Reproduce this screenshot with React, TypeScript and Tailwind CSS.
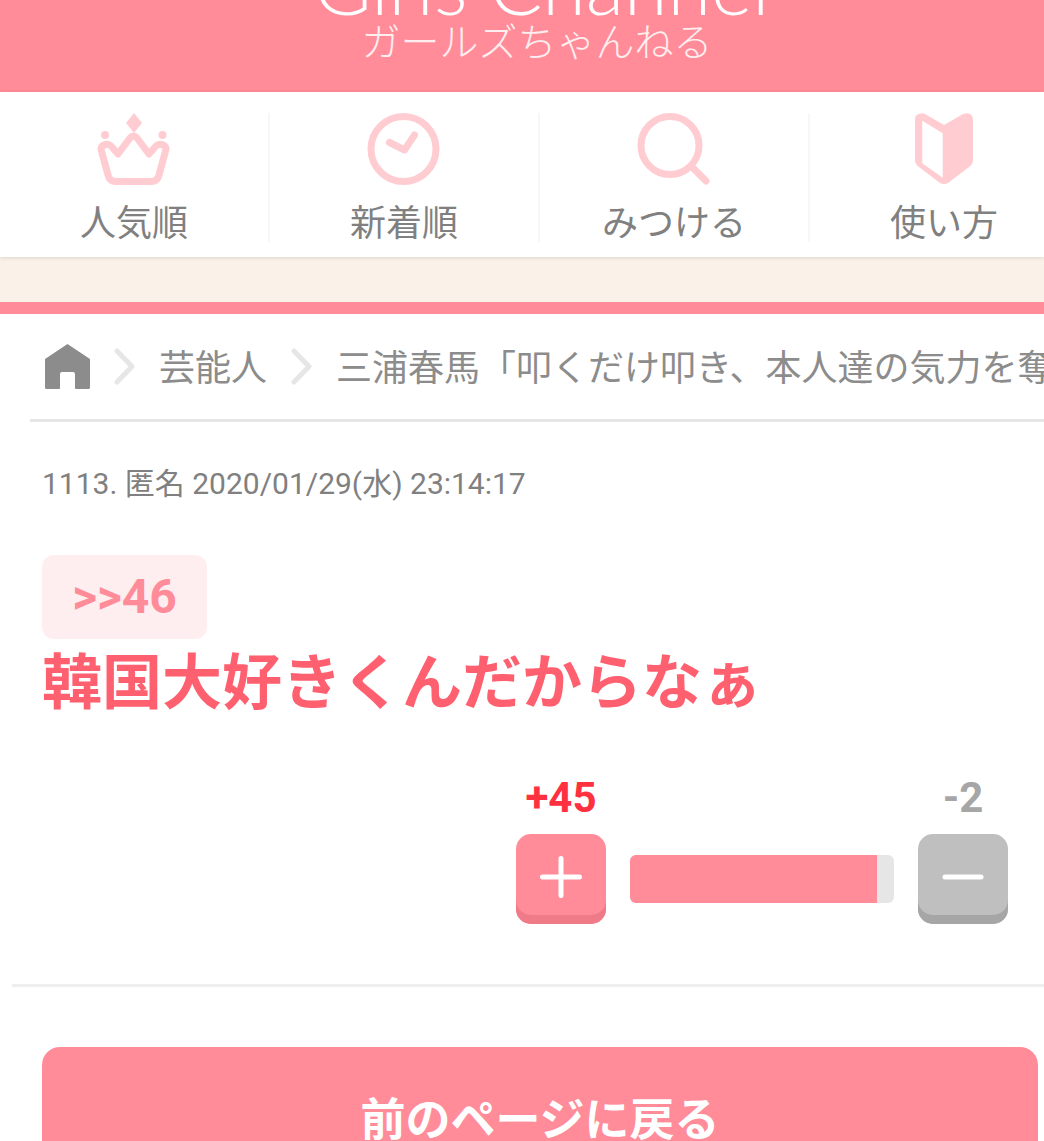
const jp = "font-['Roboto','Noto_Sans_CJK_JP',sans-serif]";

const CrownIcon = () => (
  <svg width="73" height="72" viewBox="0 0 73 72" fill="none">
    <path d="M37 0L45 10L37 20L29 10Z" fill="#ffccd2" />
    <circle cx="8" cy="22" r="4" fill="#ffccd2" />
    <circle cx="65.500" cy="22" r="4" fill="#ffccd2" />
    <path
      d="M4.500 38Q3 34 7 32Q11 30 14 33L21 41L33 25Q36.500 21 40 25L52 41L59 33Q62 30 66 32Q70 34 68.500 38L62 62Q60.500 68.500 54 68.500H19Q12.500 68.500 11 62Z"
      stroke="#ffccd2"
      strokeWidth="7"
      strokeLinejoin="round"
    />
  </svg>
);

const ClockIcon = () => (
  <svg width="73" height="72" viewBox="0 0 73 72" fill="none">
    <circle cx="36.500" cy="36" r="32.500" stroke="#ffccd2" strokeWidth="7" />
    <path d="M22.500 29.500L37.500 37L47.500 22" stroke="#ffccd2" strokeWidth="7" strokeLinecap="round" strokeLinejoin="round" />
  </svg>
);

const SearchIcon = () => (
  <svg width="73" height="72" viewBox="0 0 73 72" fill="none">
    <circle cx="33" cy="32.500" r="29" stroke="#ffccd2" strokeWidth="7" />
    <path d="M55 54L69 68" stroke="#ffccd2" strokeWidth="7" strokeLinecap="round" />
  </svg>
);

const BookIcon = () => (
  <svg width="58" height="72" viewBox="0 0 58 72">
    <path
      fillRule="evenodd"
      fill="#ffccd2"
      d="M6 0.500Q8 0 10 1L29 12L48 1Q58 -2 58 8V47Q58 51 54 54L33 70Q29 72 25 70L4 54Q0 51 0 47V6Q0 1 6 0.500ZM7.300 7.700V50.300L27.700 64.700V20.300Z"
    />
  </svg>
);

const HomeIcon = () => (
  <svg width="45" height="45" viewBox="0 0 45 45" className="shrink-0">
    <path
      fill="#8c8c8c"
      d="M22.500 0L45 15V43.500Q45 45 43.500 45H31Q30 45 30 44V30Q30 28 28 28H17Q15 28 15 30V44Q15 45 14 45H1.500Q0 45 0 43.500V15Z"
    />
  </svg>
);

const Chevron = () => (
  <svg width="21" height="37" viewBox="0 0 21 37" fill="none" className="shrink-0">
    <path d="M3 3L18 18.500L3 34" stroke="#e6e6e6" strokeWidth="5" strokeLinecap="round" strokeLinejoin="round" />
  </svg>
);

const navItems = [
  { label: "人気順", icon: <CrownIcon /> },
  { label: "新着順", icon: <ClockIcon /> },
  { label: "みつける", icon: <SearchIcon /> },
  { label: "使い方", icon: <BookIcon /> },
];

const App = () => {
  return (
    <div className={`w-[1044px] h-[1141px] overflow-hidden bg-white ${jp}`}>
      {/* Logo, cut off by the top of the page */}
      <header className="h-[92px] bg-[#ff8c98] flex flex-col items-center overflow-hidden">
        <div className="-mt-[57px] ml-[39px] h-[76px] leading-[84px] text-[79px] font-light text-white whitespace-nowrap font-['Lato',sans-serif]">
          Girls Channel
        </div>
        <div className="ml-[30px] h-[40px] leading-[40px] text-[39px] font-light text-[#ffeef0] whitespace-nowrap font-['Noto_Sans_CJK_JP',sans-serif]">
          ガールズちゃんねる
        </div>
      </header>

      <nav className="h-[165px] flex pt-[21px] bg-white shadow-[0_1px_4px_rgba(0,0,0,0.12)] relative">
        {navItems.map((item, i) => (
          <div
            key={item.label}
            className={`w-[270px] h-[129px] shrink-0 flex flex-col items-center border-r-[2px] ${i < 3 ? "border-[#f7f7f7]" : "border-transparent"}`}
          >
            <div className="h-[72px] pr-[1px] flex items-center justify-center">{item.icon}</div>
            <div className="mt-[17px] text-[36px] leading-[44px] text-[#808080] whitespace-nowrap">{item.label}</div>
          </div>
        ))}
      </nav>

      <div className="h-[45px] bg-[#faf2e8]" />
      <div className="h-[12px] bg-[#ff8c98]" />

      <div className="ml-[30px] h-[108px] border-b-[3px] border-[#e6e6e6] flex items-center gap-[24px] pl-[15px] overflow-hidden text-[36px] text-[#8c8c8c] whitespace-nowrap">
        <HomeIcon />
        <Chevron />
        <span className="pt-[4px]">芸能人</span>
        <Chevron />
        <span className="pt-[4px]">三浦春馬「叩くだけ叩き、本人達の気力を奪う」</span>
      </div>

      <div className="pl-[42px] pt-[42px] text-[30px] leading-[40px] text-[#808080]">1113. 匿名 2020/01/29(水) 23:14:17</div>

      <div className="ml-[42px] mt-[51px] w-[165px] h-[84px] rounded-[12px] bg-[#ffeef0] flex items-center justify-center text-[48px] font-bold text-[#ff8c98]">
        &gt;&gt;46
      </div>
      <div className="pl-[42px] h-[86px] leading-[90px] text-[60px] font-bold text-[#ff6070] whitespace-nowrap">韓国大好きくんだからなぁ</div>

      <div className="mt-[49px] pr-[36px] flex justify-end items-end gap-[24px]">
        <div className="w-[90px] flex flex-col items-center">
          <div className="text-[42px] leading-[48px] font-bold text-[#ff3040]">+45</div>
          <div className="mt-[12px] w-[90px] h-[90px] rounded-[15px] bg-[#ff8c98] shadow-[inset_0_-9px_0_#ee7b87] flex items-center justify-center pb-[5px]">
            <svg width="42" height="42" viewBox="0 0 42 42" fill="none">
              <path d="M21 2.500V39.500M2.500 21H39.500" stroke="#fff" strokeWidth="5" strokeLinecap="round" />
            </svg>
          </div>
        </div>
        <div className="w-[264px] h-[48px] mb-[21px] rounded-[6px] bg-[#e6e6e6] overflow-hidden">
          <div className="h-full bg-[#ff8c98]" style={{ width: `${(247 / 264) * 100}%` }} />
        </div>
        <div className="w-[90px] flex flex-col items-center">
          <div className="text-[42px] leading-[48px] font-bold text-[#a6a6a6]">-2</div>
          <div className="mt-[12px] w-[90px] h-[90px] rounded-[15px] bg-[#bfbfbf] shadow-[inset_0_-9px_0_#a6a6a6] flex items-center justify-center pb-[4px]">
            <svg width="42" height="6" viewBox="0 0 42 6" fill="none">
              <path d="M3 3H39" stroke="#fff" strokeWidth="5" strokeLinecap="round" />
            </svg>
          </div>
        </div>
      </div>

      <div className="ml-[12px] mt-[60px] h-[3px] bg-[#eeeeee]" />

      <div className="ml-[42px] mt-[60px] w-[996px] h-[146px] pt-[2px] rounded-[18px] bg-[#ff8c98] flex items-center justify-center text-[45px] font-bold text-white">
        前のページに戻る
      </div>
    </div>
  );
};

export default App;
